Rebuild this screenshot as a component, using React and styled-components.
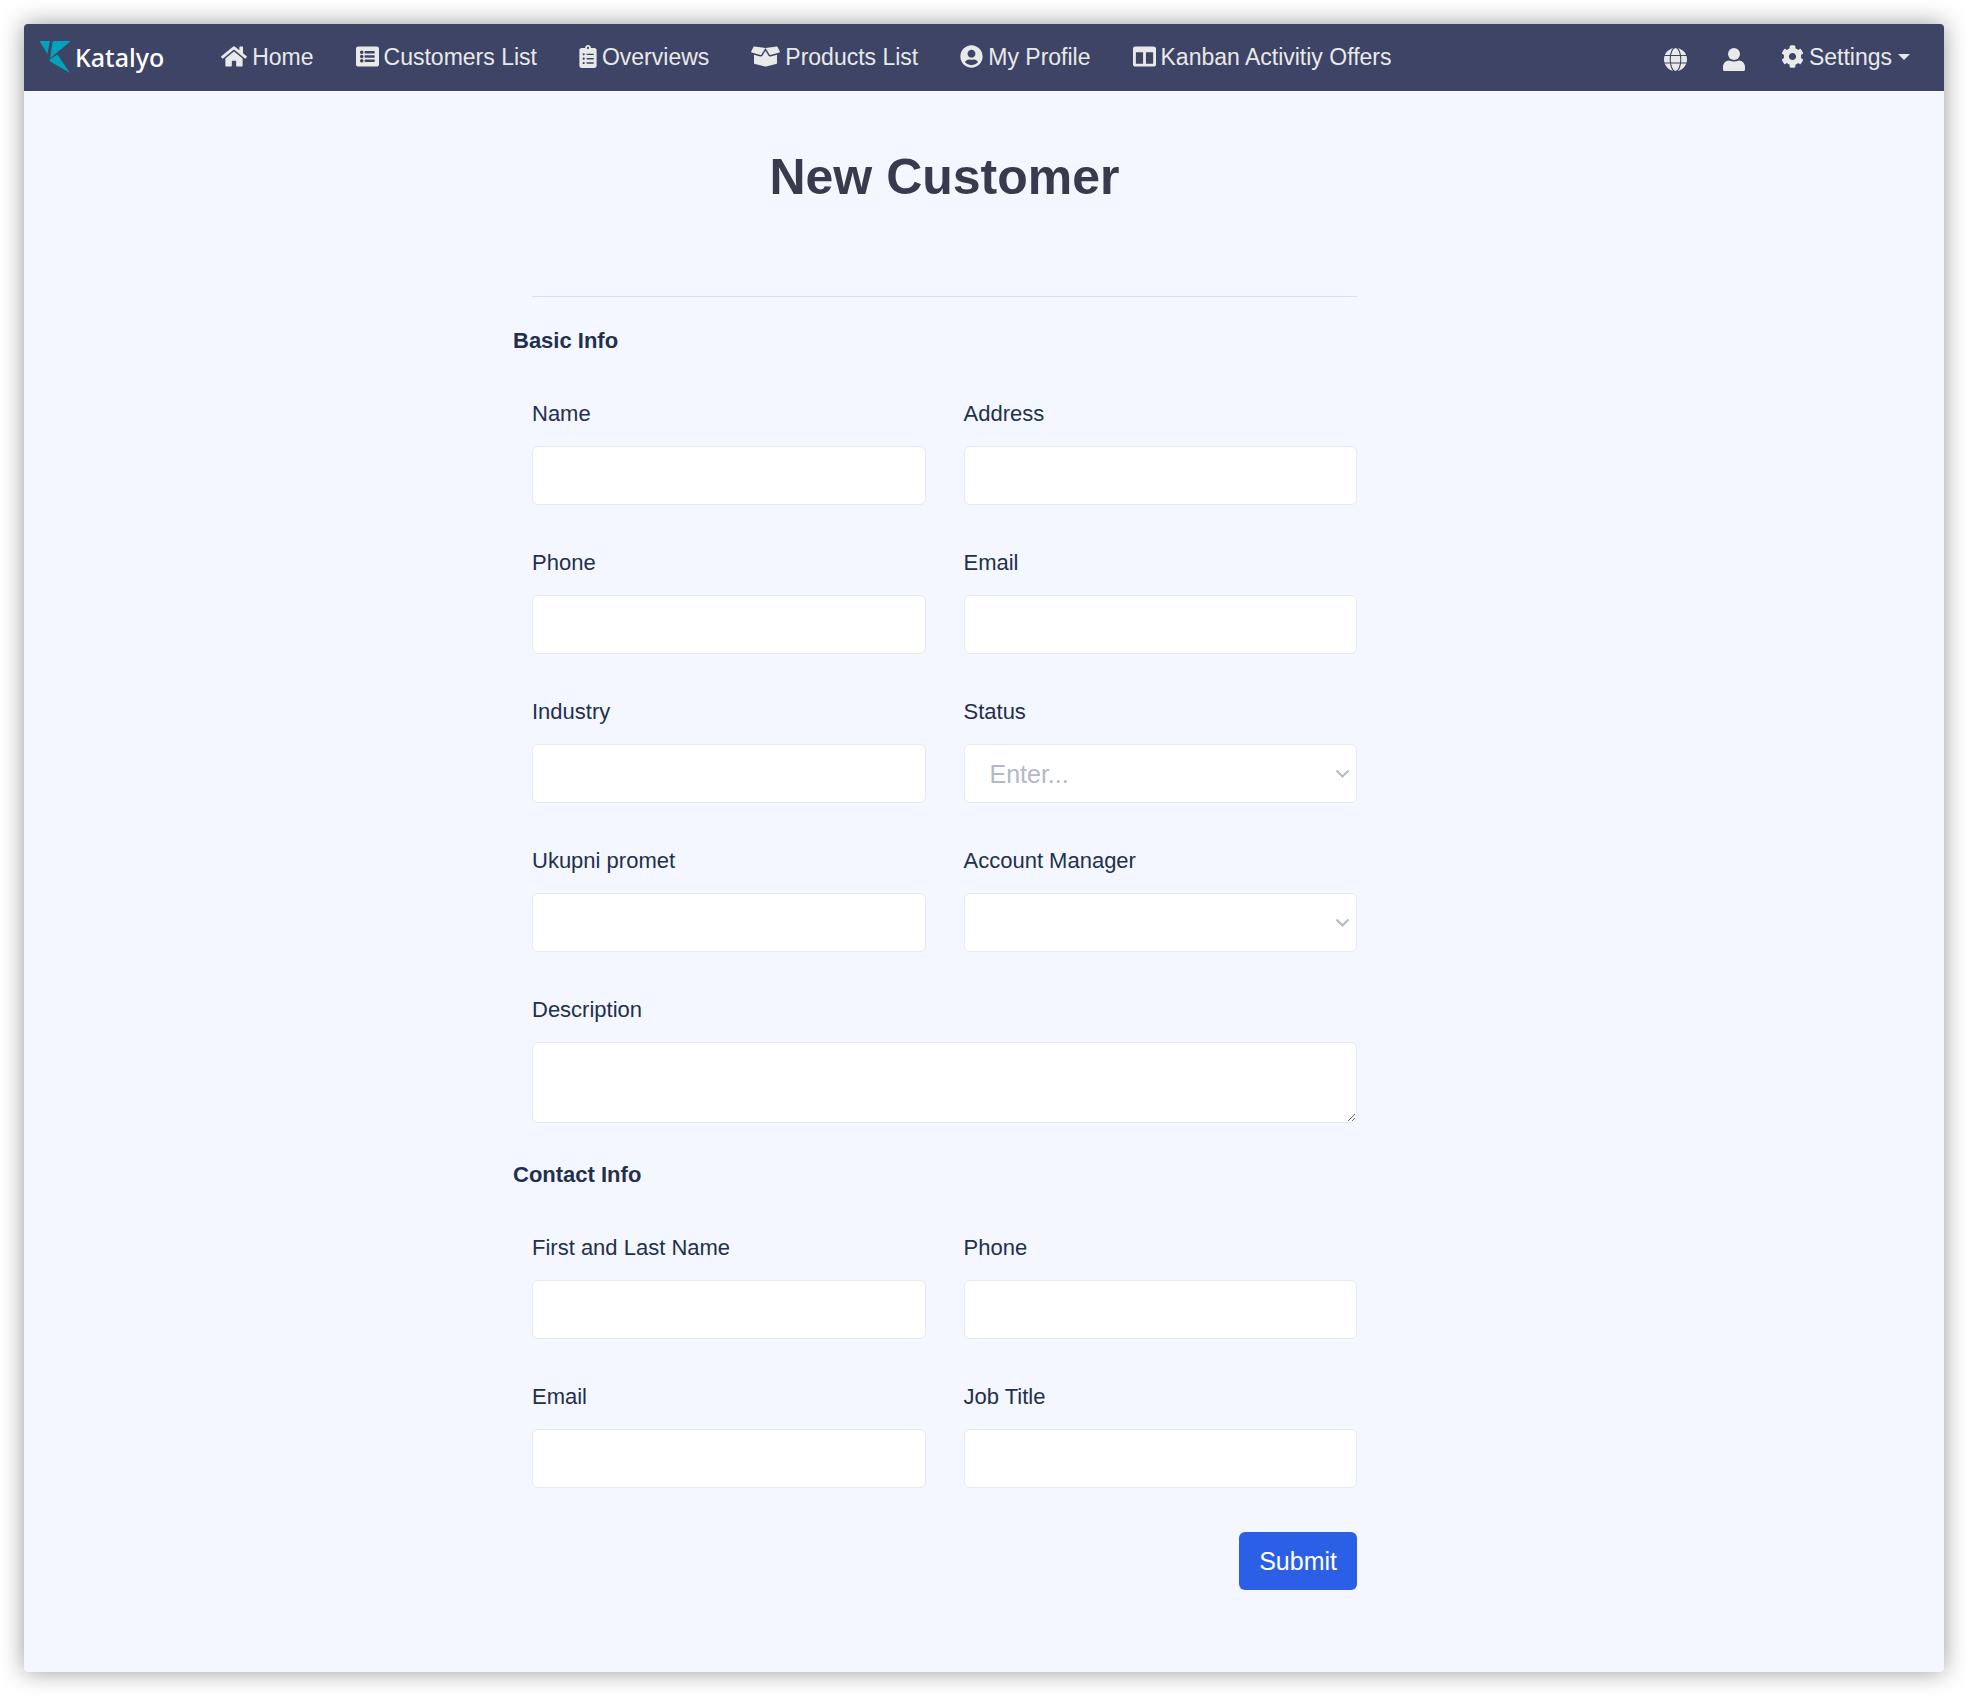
import React from "react";
import styled, { createGlobalStyle, css } from "styled-components";
import {
  FaHome,
  FaListAlt,
  FaClipboardList,
  FaBoxOpen,
  FaUserCircle,
  FaColumns,
  FaCog,
} from "react-icons/fa";

const GlobalStyle = createGlobalStyle`
  *, *::before, *::after { box-sizing: border-box; }
  body {
    margin: 0;
    background: #fff;
    color: #22304d;
    font-family: "Liberation Sans", Arial, Helvetica, sans-serif;
    font-size: 22px;
  }
  input, select, textarea, button { font-family: inherit; }
`;

const Page = styled.div`
  min-height: 100vh;
  padding: 24px;
  display: flex;
`;

const Window = styled.div`
  flex: 1;
  display: flex;
  flex-direction: column;
  border-radius: 4px;
  overflow: hidden;
  background: #f4f7ff;
  box-shadow: 0 0 24px rgba(0, 0, 0, 0.4);
`;

const Navbar = styled.nav`
  display: flex;
  align-items: center;
  min-height: 67px;
  padding: 0 34px 2px 16px;
  background: #3d4465;
`;

const Brand = styled.a`
  display: flex;
  align-items: center;
  gap: 5px;
  margin-right: 57px;
  color: #fff;
  text-decoration: none;
  font-family: "Noto Sans", "Open Sans", sans-serif;
  font-size: 25px;
  line-height: 32px;
  font-weight: 500;

  svg {
    width: 30px;
    height: 32px;
  }
`;

const NavList = styled.ul`
  display: flex;
  align-items: center;
  gap: ${(p) => p.$gap}px;
  margin: 0;
  margin-left: ${(p) => (p.$end ? "auto" : "0")};
  padding: 0;
  list-style: none;
`;

const NavLink = styled.a`
  display: flex;
  align-items: center;
  gap: 5px;
  color: #e9e9ea;
  font-size: 23px;
  line-height: 34px;
  text-decoration: none;
  white-space: nowrap;

  svg {
    flex: none;
    height: 23px;
    width: ${(p) => p.$iconWidth}px;
  }
`;

const IconButton = styled.button`
  display: flex;
  padding: 5px 0 0;
  border: 0;
  background: none;
  color: #e9e9ea;
`;

const MenuButton = styled(NavLink).attrs({ as: "button", type: "button" })`
  padding: 0;
  border: 0;
  background: none;

  &::after {
    content: "";
    margin-left: 1px;
    border: 6px solid transparent;
    border-top-color: currentColor;
    border-bottom: 0;
  }
`;

const Content = styled.main`
  display: grid;
  grid-template-columns: minmax(0, 469fr) minmax(320px, 863fr) minmax(0, 548fr);
  padding: 54px 20px 80px;
`;

const Form = styled.form`
  grid-column: 2;
  display: flex;
  flex-direction: column;
`;

const Title = styled.h1`
  margin: 0;
  color: #383a4d;
  font-size: 50px;
  line-height: 64px;
  font-weight: 700;
  text-align: center;
`;

const Divider = styled.hr`
  width: auto;
  margin: 87px 19px 0;
  border: 0;
  border-top: 1px solid #dadfe9;
`;

const Section = styled.fieldset`
  min-width: 0;
  margin: 0;
  padding: 0;
  border: 0;
`;

const Legend = styled.legend`
  padding: 28px 0 0;
  font-size: 22px;
  line-height: 32px;
  font-weight: 700;
`;

const Grid = styled.div`
  display: grid;
  grid-template-columns: 1fr 1fr;
  column-gap: 38px;
  row-gap: 42px;
  padding: 41px 19px 8px;
`;

const Field = styled.div`
  display: flex;
  flex-direction: column;
  gap: 16px;
  min-width: 0;
  grid-column: ${(p) => (p.$wide ? "1 / -1" : "auto")};
`;

const Label = styled.label`
  font-size: 22px;
  line-height: 32px;
`;

const control = css`
  display: block;
  width: 100%;
  height: 59px;
  padding: 0 25px;
  border: 1px solid #e7e9ee;
  border-radius: 6px;
  background-color: #fff;
  color: #22304d;
  font-size: 25px;
`;

const Input = styled.input`
  ${control}
`;

const Area = styled.textarea`
  ${control}
  height: 81px;
  padding: 12px 25px;
  resize: both;
`;

const SelectBox = styled.div`
  display: grid;
  align-items: center;

  > * {
    grid-area: 1 / 1;
  }

  svg {
    justify-self: end;
    margin-right: 7px;
    pointer-events: none;
  }
`;

const Select = styled.select`
  ${control}
  appearance: none;
  color: #b5b8c5;
`;

const Submit = styled.button`
  align-self: flex-end;
  height: 58px;
  margin: 36px 19px 0;
  padding: 0 20px;
  border: 0;
  border-radius: 6px;
  background: #2b60e6;
  color: #fff;
  font-size: 25px;
`;

const Logo = () => (
  <svg viewBox="0 0 30 32" fill="#00a3bb" aria-hidden="true">
    <path d="M.6 0H9q1 0 .8 1L7.400 13 .2 1.200Q-.4 0 .6 0z" />
    <path d="M14 0H29.500q1 0 .4.700L10.300 17.300Q11 8 12.600 1.200 12.900 0 14 0z" />
    <path d="M9.500 18.600 17.500 13.500 30 32 10.200 20.500q-1.200-.8-.7-1.900z" />
  </svg>
);

const Globe = () => (
  <svg width="23" height="23" viewBox="0 0 23 23" aria-hidden="true">
    <circle cx="11.500" cy="11.500" r="11.500" fill="currentColor" />
    <g fill="none" stroke="#3d4465" strokeWidth="1.100">
      <ellipse cx="11.500" cy="11.500" rx="5.300" ry="12" />
      <path d="M0 7.500H23M0 15H23" />
    </g>
  </svg>
);

const Person = () => (
  <svg width="22" height="23" viewBox="0 0 22 23" fill="currentColor" aria-hidden="true">
    <circle cx="11" cy="6" r="6" />
    <path d="M6 12.500Q11 14.500 16 12.500C19.500 12.500 22 15.500 22 19V21.500Q22 23 20.500 23H1.500Q0 23 0 21.500V19C0 15.500 2.500 12.500 6 12.500z" />
  </svg>
);

const Chevron = () => (
  <svg width="15" height="10" viewBox="0 0 15 10" fill="none" stroke="#b5b8c5" strokeWidth="2" aria-hidden="true">
    <path d="M1.500 1.500 7.500 7.500 13.500 1.500" />
  </svg>
);

const links = [
  { label: "Home", Icon: FaHome, width: 26 },
  { label: "Customers List", Icon: FaListAlt, width: 23 },
  { label: "Overviews", Icon: FaClipboardList, width: 18 },
  { label: "Products List", Icon: FaBoxOpen, width: 29 },
  { label: "My Profile", Icon: FaUserCircle, width: 23 },
  { label: "Kanban Activitiy Offers", Icon: FaColumns, width: 23 },
];

const sections = [
  {
    title: "Basic Info",
    fields: [
      { id: "name", label: "Name" },
      { id: "address", label: "Address" },
      { id: "phone", label: "Phone", type: "tel" },
      { id: "email", label: "Email", type: "email" },
      { id: "industry", label: "Industry" },
      { id: "status", label: "Status", kind: "select", placeholder: "Enter..." },
      { id: "turnover", label: "Ukupni promet" },
      { id: "manager", label: "Account Manager", kind: "select", placeholder: "" },
      { id: "description", label: "Description", kind: "area" },
    ],
  },
  {
    title: "Contact Info",
    fields: [
      { id: "contact-name", label: "First and Last Name" },
      { id: "contact-phone", label: "Phone", type: "tel" },
      { id: "contact-email", label: "Email", type: "email" },
      { id: "job-title", label: "Job Title" },
    ],
  },
];

function Control({ id, kind, type = "text", placeholder }) {
  if (kind === "area") return <Area id={id} name={id} />;
  if (kind === "select") {
    return (
      <SelectBox>
        <Select id={id} name={id} defaultValue="">
          <option value="">{placeholder}</option>
        </Select>
        <Chevron />
      </SelectBox>
    );
  }
  return <Input id={id} name={id} type={type} />;
}

export default function App() {
  return (
    <>
      <GlobalStyle />
      <Page>
        <Window>
          <Navbar>
            <Brand href="#">
              <Logo />
              Katalyo
            </Brand>
            <NavList $gap={42}>
              {links.map(({ label, Icon, width }) => (
                <li key={label}>
                  <NavLink href="#" $iconWidth={width}>
                    <Icon aria-hidden="true" />
                    {label}
                  </NavLink>
                </li>
              ))}
            </NavList>
            <NavList $end $gap={36}>
              <li>
                <IconButton type="button" aria-label="Language">
                  <Globe />
                </IconButton>
              </li>
              <li>
                <IconButton type="button" aria-label="Account">
                  <Person />
                </IconButton>
              </li>
              <li>
                <MenuButton $iconWidth={23}>
                  <FaCog aria-hidden="true" />
                  Settings
                </MenuButton>
              </li>
            </NavList>
          </Navbar>
          <Content>
            <Form onSubmit={(e) => e.preventDefault()}>
              <Title>New Customer</Title>
              <Divider />
              {sections.map((s) => (
                <Section key={s.title}>
                  <Legend>{s.title}</Legend>
                  <Grid>
                    {s.fields.map((f) => (
                      <Field key={f.id} $wide={f.kind === "area"}>
                        <Label htmlFor={f.id}>{f.label}</Label>
                        <Control {...f} />
                      </Field>
                    ))}
                  </Grid>
                </Section>
              ))}
              <Submit type="submit">Submit</Submit>
            </Form>
          </Content>
        </Window>
      </Page>
    </>
  );
}
